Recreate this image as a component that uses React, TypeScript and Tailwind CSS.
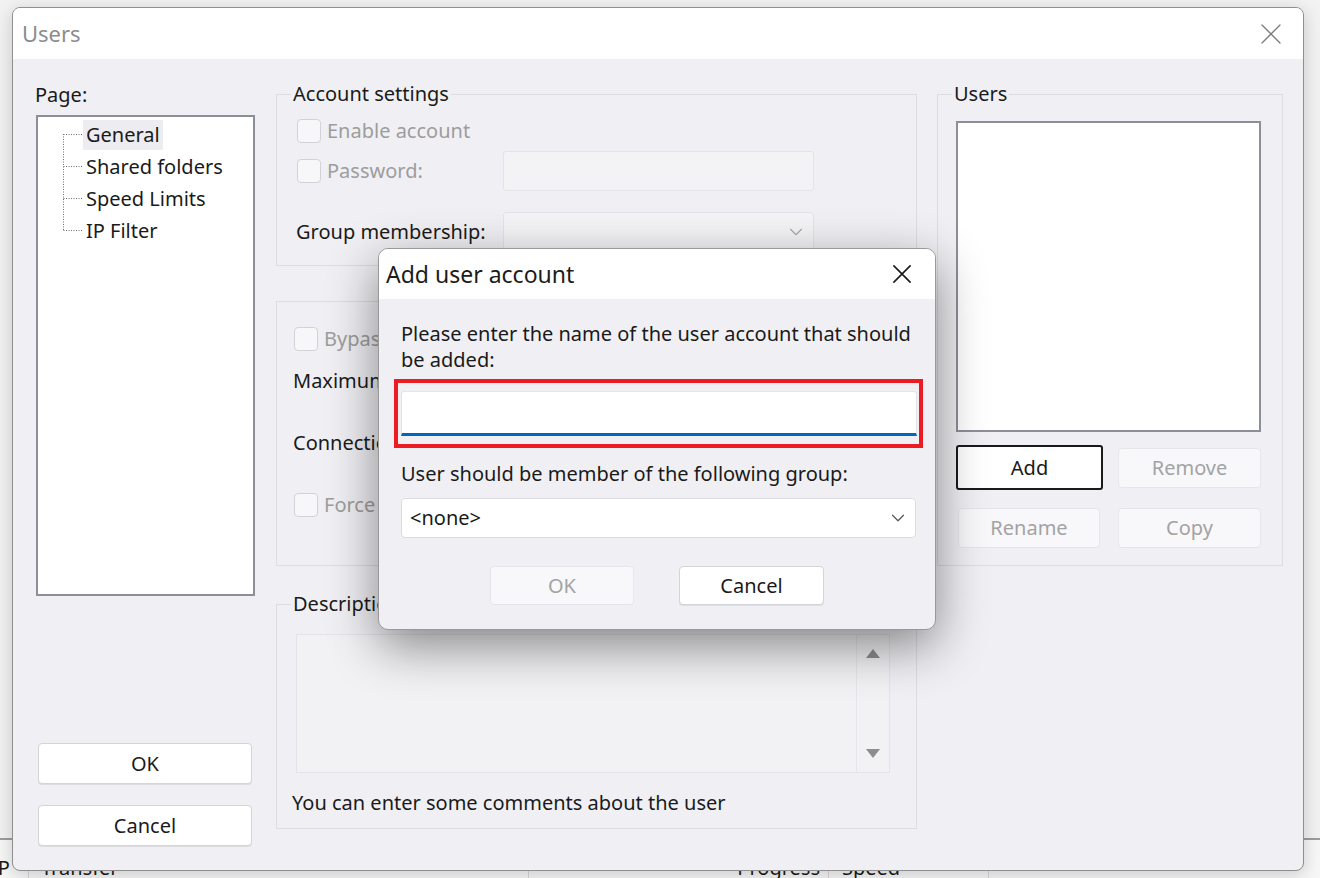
import { ChevronDown } from 'lucide-react';
import type { ReactNode } from 'react';

function CloseGlyph({ size, color, width }: { size: number; color: string; width: number }) {
  return (
    <svg width={size} height={size} viewBox="0 0 20 20" fill="none" stroke={color} strokeWidth={width} strokeLinecap="round">
      <path d="M1 1 19 19M19 1 1 19" />
    </svg>
  );
}

function Checkbox() {
  return <span className="h-[24px] w-[24px] shrink-0 rounded-[4px] border border-[#d2d2d7] bg-[#f7f7f9]" />;
}

function Group({ title, className, children }: { title: string; className?: string; children?: ReactNode }) {
  return (
    <div className={`relative border border-[#dcdce1] ${className ?? ''}`}>
      <span className="absolute left-[14px] top-[-14px] bg-[#f0f0f4] px-[2px] leading-[26px] text-[#1a1a1a]">{title}</span>
      {children}
    </div>
  );
}

function Button({ label, disabled, className }: { label: string; disabled?: boolean; className?: string }) {
  return (
    <div
      className={`flex items-center justify-center rounded-[4px] border ${
        disabled
          ? 'border-[#e6e6ea] bg-[#f8f8fa] text-[#a3a3a3]'
          : 'border-[#d3d3d8] bg-white text-[#1a1a1a] shadow-[0_1px_0_rgba(0,0,0,0.08)]'
      } ${className ?? ''}`}
    >
      {label}
    </div>
  );
}

export default function App() {
  const tree = ['General', 'Shared folders', 'Speed Limits', 'IP Filter'];

  return (
    <div className="relative h-[878px] w-[1320px] overflow-hidden bg-[#f2f2f3] font-['Noto_Sans','Liberation_Sans',sans-serif] text-[20px] text-[#1a1a1a]">
      {/* app behind the dialog */}
      <div className="h-[840px] border-b-2 border-[#9c9c9c]" />
      <div className="flex h-[38px] bg-[#f7f7f7] pt-[15px] leading-[26px]">
        <div className="w-[29px] overflow-hidden border-r border-[#d8d8d8] whitespace-nowrap"><span className="-ml-[9px] block">IP</span></div>
        <div className="w-[500px] border-r border-[#d8d8d8] pl-[12px]">Transfer</div>
        <div className="w-[300px] border-r border-[#d8d8d8] pr-[8px] text-right">Progress</div>
        <div className="w-[160px] border-r border-[#d8d8d8] pl-[13px]">Speed</div>
      </div>

      {/* Users window */}
      <div className="absolute left-[12px] top-[7px] flex h-[864px] w-[1292px] flex-col overflow-hidden rounded-[8px] border border-[#8f8f8f] bg-[#f0f0f4] shadow-[0_4px_18px_rgba(0,0,0,0.18)]">
        <div className="flex h-[51px] shrink-0 items-center justify-between bg-white pl-[9px] pr-[22px]">
          <span className="text-[22px] text-[#8c8c8c]">Users</span>
          <CloseGlyph size={20} color="#7a7a7a" width={1.3} />
        </div>

        <div className="flex flex-1 items-start pl-[23px]">
          {/* left column */}
          <div className="flex w-[219px] flex-col pt-[23px]">
            <span className="-ml-[1px] leading-[26px]">Page:</span>
            <div className="relative mt-[7px] h-[481px] border-2 border-[#8c8f97] bg-white pt-[2px]">
              <svg className="absolute left-0 top-0" width="60" height="130" fill="none" stroke="#6f6f6f" strokeWidth="1" strokeDasharray="1 1.5">
                <path d="M25.5 17v97M25.5 17.5h19M25.5 49.5h19M25.5 81.5h19M25.5 113.5h19" />
              </svg>
              {tree.map((t, i) => (
                <div key={t} className="flex h-[32px] items-center pl-[45px]">
                  <span className={`px-[3px] leading-[30px] ${i === 0 ? 'bg-[#ececf1]' : ''}`}>{t}</span>
                </div>
              ))}
            </div>
            <Button label="OK" className="ml-[2px] mt-[147px] h-[41px] w-[214px]" />
            <Button label="Cancel" className="ml-[2px] mt-[21px] h-[41px] w-[214px]" />
          </div>

          {/* middle column */}
          <div className="ml-[21px] flex w-[641px] flex-col pt-[35px]">
            <Group title="Account settings" className="h-[172px] pl-[20px] pt-[24px]">
              <div className="flex h-[24px] items-center gap-[6px] text-[#9d9d9d]">
                <Checkbox />
                <span>Enable account</span>
              </div>
              <div className="mt-[8px] flex h-[40px] items-center">
                <div className="flex w-[206px] items-center gap-[6px] text-[#9d9d9d]">
                  <Checkbox />
                  <span>Password:</span>
                </div>
                <div className="h-[40px] w-[311px] rounded-[3px] border border-[#e3e3e8] bg-[#f3f3f6]" />
              </div>
              <div className="mt-[21px] flex h-[39px] items-center">
                <span className="-ml-[1px] w-[207px]">Group membership:</span>
                <div className="flex h-[39px] w-[311px] items-center justify-end rounded-[3px] border border-[#e3e3e8] bg-[#f4f4f7] pr-[6px]">
                  <ChevronDown size={22} strokeWidth={1.2} color="#a8a8a8" />
                </div>
              </div>
            </Group>

            <Group title="" className="mt-[35px] h-[265px] pl-[16px] pt-[25px]">
              <div className="flex h-[24px] items-center gap-[6px] pl-[1px] text-[#9d9d9d]">
                <Checkbox />
                <span>Bypass userlimit of server</span>
              </div>
              <div className="mt-[17px] leading-[26px]">Maximum connection count:</div>
              <div className="mt-[36px] leading-[26px]">Connection limit per IP:</div>
              <div className="mt-[37px] flex h-[24px] items-center gap-[6px] pl-[1px] text-[#9d9d9d]">
                <Checkbox />
                <span>Force SSL for user login</span>
              </div>
            </Group>

            <Group title="Description" className="mt-[38px] h-[225px] pt-[29px]">
              <div className="ml-[19px] flex h-[139px] w-[594px] border border-[#e4e4e8] bg-[#f2f2f5]">
                <div className="flex-1" />
                <div className="flex w-[33px] flex-col items-center justify-between border-l border-[#e6e6ea] py-[14px]">
                  <svg width="14" height="9" viewBox="0 0 14 9"><path d="M7 0 14 9H0Z" fill="#8d8d8d" /></svg>
                  <svg width="14" height="9" viewBox="0 0 14 9"><path d="M0 0h14L7 9Z" fill="#8d8d8d" /></svg>
                </div>
              </div>
              <div className="ml-[15px] mt-[17px] leading-[26px]">You can enter some comments about the user</div>
            </Group>
          </div>

          {/* right column */}
          <div className="ml-[20px] w-[346px] pt-[35px]">
            <Group title="Users" className="h-[472px] pt-[26px]">
              <div className="ml-[18px] h-[311px] w-[305px] border-2 border-[#8c8f97] bg-white" />
              <div className="mt-[13px] flex items-start">
                <div className="ml-[18px] flex h-[45px] w-[147px] items-center justify-center rounded-[3px] border-2 border-[#1a1a1a] bg-white">Add</div>
                <Button label="Remove" disabled className="ml-[15px] mt-[3px] h-[40px] w-[143px]" />
              </div>
              <div className="mt-[18px] flex items-start">
                <Button label="Rename" disabled className="ml-[20px] h-[40px] w-[142px]" />
                <Button label="Copy" disabled className="ml-[18px] h-[40px] w-[143px]" />
              </div>
            </Group>
          </div>
        </div>
      </div>

      {/* Add user account dialog */}
      <div className="absolute left-[378px] top-[248px] flex h-[382px] w-[558px] flex-col overflow-hidden rounded-[10px] border border-[#999999] bg-[#f0f0f4] shadow-[0_16px_50px_rgba(0,0,0,0.45)]">
        <div className="flex h-[50px] shrink-0 items-center justify-between bg-white pl-[7px] pr-[24px]">
          <span className="text-[23px] text-[#1c1c1c]">Add user account</span>
          <CloseGlyph size={18} color="#1a1a1a" width={1.8} />
        </div>
        <div className="flex flex-col pl-[22px] pr-[18px] pt-[22px]">
          <div className="leading-[26px]">
            <span className="block whitespace-nowrap">Please enter the name of the user account that should</span>
            <span className="block">be added:</span>
          </div>
          <div className="-ml-[7px] mt-[6px] h-[69px] w-[529px] border-4 border-[#ec1c24] pl-[3px] pr-[2px] pt-[8px]">
            <div className="h-[45px] w-full rounded-t-[3px] border border-b-[3px] border-[#e4e4e8] border-b-[#0067c0] bg-white" />
          </div>
          <div className="mt-[13px] leading-[26px]">User should be member of the following group:</div>
          <div className="mt-[11px] flex h-[40px] w-[515px] items-center justify-between rounded-[4px] border border-[#dcdce0] bg-white pl-[8px] pr-[6px]">
            <span>&lt;none&gt;</span>
            <ChevronDown size={22} strokeWidth={1.3} color="#555555" />
          </div>
          <div className="mt-[28px] flex justify-center gap-[45px] pr-[4px]">
            <Button label="OK" disabled className="h-[39px] w-[144px]" />
            <Button label="Cancel" className="h-[39px] w-[145px]" />
          </div>
        </div>
      </div>
    </div>
  );
}
